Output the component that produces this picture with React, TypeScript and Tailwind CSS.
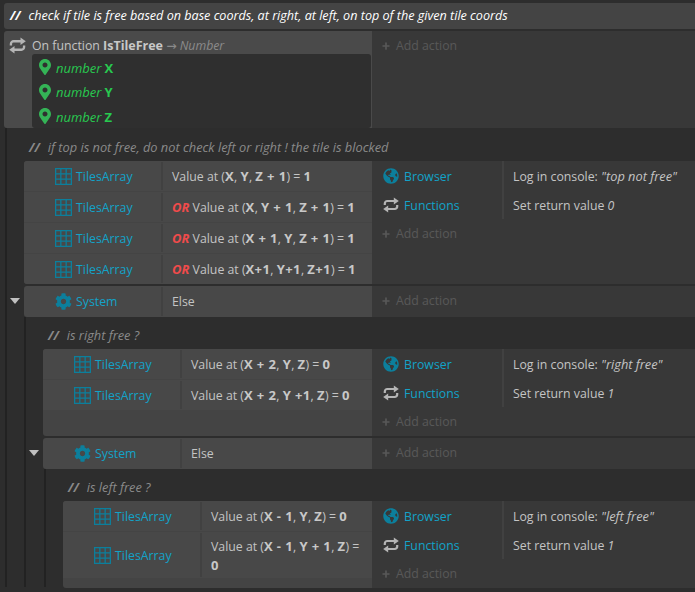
import * as React from "react";

import { FaCog, FaGlobeAmericas, FaMapMarkerAlt } from "react-icons/fa";
import { Plus } from "lucide-react";

const FONT = "font-['Open_Sans','Noto_Sans',sans-serif]";

function GridIcon() {
  return (
    <svg viewBox="0 0 16 16" className="size-[17px] flex-none" fill="none" stroke="#0c7f9c" strokeWidth="1.2">
      <rect x="0.6" y="0.6" width="14.8" height="14.8" />
      <path d="M5.5 0.6V15.4M10.5 0.6V15.4M0.6 5.5H15.4M0.6 10.5H15.4" />
    </svg>
  );
}

function SwapIcon({ className }: { className: string }) {
  return (
    <svg viewBox="0 0 16 16" className={className} fill="none">
      <path d="M1.8 8V6.5A2.5 2.5 0 0 1 4.3 4H12" stroke="currentColor" strokeWidth="2.2" />
      <path d="M10.8 0.4L15.8 4L10.8 7.6Z" fill="currentColor" />
      <path d="M14.2 8V9.5A2.5 2.5 0 0 1 11.7 12H4" stroke="currentColor" strokeWidth="2.2" />
      <path d="M5.2 8.4L0.2 12L5.2 15.6Z" fill="currentColor" />
    </svg>
  );
}

function ObjectCell({ icon, name }: { icon: React.ReactNode; name: string }) {
  return (
    <div className="flex w-[137px] flex-none items-center gap-[4px] pl-[31px] text-[#12a3c8]">
      {icon}
      <span className="pt-[1px]">{name}</span>
    </div>
  );
}

function B({ children }: { children: React.ReactNode }) {
  return <b className="text-[13px] font-bold tracking-[0.4px] text-[#c8c8c8]">{children}</b>;
}

function Or() {
  return <b className="text-[13px] font-bold text-[#f04b4b] italic">OR</b>;
}

function Condition({
  icon = <GridIcon />,
  name = "TilesArray",
  height = "h-[30px]",
  children,
}: {
  icon?: React.ReactNode;
  name?: string;
  height?: string;
  children: React.ReactNode;
}) {
  return (
    <div className={`flex ${height} bg-[#484848]`}>
      <ObjectCell icon={icon} name={name} />
      <div className="my-[1px] w-[2px] flex-none bg-[#414141]" />
      <div className="flex flex-1 items-center pt-[1px] pr-[10px] pl-[9px] leading-[18px] text-[#c4c4c4]">
        <div>{children}</div>
      </div>
    </div>
  );
}

function Action({
  icon,
  name,
  children,
}: {
  icon: React.ReactNode;
  name: string;
  children: React.ReactNode;
}) {
  return (
    <div className="flex h-[29px] items-center">
      <div className="flex w-[130px] flex-none items-center gap-[5px] pl-[11px] text-[#12a3c8]">
        {icon}
        <span className="pt-[2px]">{name}</span>
      </div>
      <div className="h-full w-[2px] flex-none bg-[#414141]" />
      <div className="pt-[2px] pl-[9px] whitespace-nowrap text-[#c4c4c4]">{children}</div>
    </div>
  );
}

function AddAction() {
  return (
    <div className="flex h-[29px] items-center gap-[5px] pt-[1px] pl-[9px] text-[#585858]">
      <Plus className="size-[10px]" strokeWidth={4} />
      <span>Add action</span>
    </div>
  );
}

const browserIcon = <FaGlobeAmericas className="size-[16px] flex-none text-[#0c7f9c]" />;
const functionsIcon = <SwapIcon className="size-[16px] flex-none text-[#b5b5b5]" />;
const systemIcon = <FaCog className="size-[17px] flex-none text-[#0c7f9c]" />;

function Event({
  width,
  conditions,
  actions,
  arrow = false,
}: {
  width: string;
  conditions: React.ReactNode;
  actions: React.ReactNode;
  arrow?: boolean;
}) {
  return (
    <div className="relative flex">
      {arrow && (
        <div className="absolute top-[12px] -left-[14px] size-0 border-x-[5px] border-t-[6px] border-x-transparent border-t-[#c0c0c0]" />
      )}
      <div className={`${width} flex-none overflow-hidden rounded-l-[3px] bg-[#444444]`}>{conditions}</div>
      <div className="min-w-0 flex-1 bg-[#383838]">{actions}</div>
    </div>
  );
}

function Comment({ text, box = "h-[32px] pt-[4px]" }: { text: string; box?: string }) {
  return (
    <div className={`flex ${box} items-center pl-[5px] text-[12.8px] text-[#8a8a8a] italic`}>
      <span className="mr-[8px] font-bold">//</span>
      <span>{text}</span>
    </div>
  );
}

function Param({ name, height = "h-[24.5px]" }: { name: string; height?: string }) {
  return (
    <div className={`flex ${height} items-center pl-[7px] text-[#28c94f]`}>
      <FaMapMarkerAlt className="h-[16px] w-[12px] flex-none text-[#34b356]" />
      <span className="ml-[5px] pt-[1px] text-[13px] italic">number</span>
      <b className="ml-[3px] pt-[1px] text-[13px] font-bold">{name}</b>
    </div>
  );
}

export default function App() {
  return (
    <div className={`${FONT} h-[592px] w-[695px] overflow-hidden bg-[#2d2d2d] text-[12.3px] leading-[16px]`}>
      <div className="pt-[3px] pl-[4px]">
        <div className="flex h-[26px] items-center rounded-l-[3px] bg-[#444444] pl-[6px] text-[12.6px] whitespace-nowrap text-white italic">
          <span className="mr-[8px] font-bold">//</span>
          <span>check if tile is free based on base coords, at right, at left, on top of the given tile coords</span>
        </div>

        <div className="mt-[2px] flex">
          <div className="flex w-[368px] flex-none flex-col rounded-l-[3px] bg-[#4a4a4a]">
            <div className="flex h-[23px] items-center pt-[6px]">
              <SwapIcon className="ml-[5px] size-[17px] flex-none text-[#b5b5b5]" />
              <span className="ml-[6px] text-[#c4c4c4]">
                On function <b className="text-[12.5px] font-bold text-[#c8c8c8]">IsTileFree</b>{" "}
                <span className="font-['DejaVu_Sans'] text-[#8a8a8a]">→</span>{" "}
                <i className="text-[#8a8a8a]">Number</i>
              </span>
            </div>
            <div className="mr-[1px] ml-[28px] rounded-[3px] bg-[#2f2f2f] pt-[1px]">
              <Param name="X" />
              <Param name="Y" />
              <Param name="Z" height="h-[24px]" />
            </div>
          </div>
          <div className="flex-1 bg-[#383838]">
            <AddAction />
          </div>
        </div>

        <div className="ml-[1px] border-l-[2px] border-[#222222] pl-[17px]">
          <Comment text="if top is not free, do not check left or right ! the tile is blocked" box="h-[33px] pt-[5px]" />
          <Event
            width="w-[348px]"
            conditions={
              <div className="flex flex-col gap-[1px]">
                <Condition>
                  Value at (<B>X</B>, <B>Y</B>, <B>Z + 1</B>) = <B>1</B>
                </Condition>
                <Condition>
                  <Or /> Value at (<B>X</B>, <B>Y + 1</B>, <B>Z + 1</B>) = <B>1</B>
                </Condition>
                <Condition>
                  <Or /> Value at (<B>X + 1</B>, <B>Y</B>, <B>Z + 1</B>) = <B>1</B>
                </Condition>
                <Condition>
                  <Or /> Value at (<B>X+1</B>, <B>Y+1</B>, <B>Z+1</B>) = <B>1</B>
                </Condition>
              </div>
            }
            actions={
              <div className="h-[123px]">
                <Action icon={browserIcon} name="Browser">
                  Log in console: <span className="text-[12.8px] italic">"top not free"</span>
                </Action>
                <Action icon={functionsIcon} name="Functions">
                  Set return value <i>0</i>
                </Action>
                <AddAction />
              </div>
            }
          />
          <div className="mt-[2px]">
            <Event
              arrow
              width="w-[348px]"
              conditions={
                <Condition icon={systemIcon} name="System" height="h-[31px]">
                  Else
                </Condition>
              }
              actions={<AddAction />}
            />
          </div>

          <div className="border-l-[2px] border-[#222222] pl-[17px]">
            <Comment text="is right free ?" />
            <Event
              width="w-[329px]"
              conditions={
                <div className="flex h-[86px] flex-col gap-[1px]">
                  <Condition>
                    Value at (<B>X + 2</B>, <B>Y</B>, <B>Z</B>) = <B>0</B>
                  </Condition>
                  <Condition>
                    Value at (<B>X + 2</B>, <B>Y +1</B>, <B>Z</B>) = <B>0</B>
                  </Condition>
                </div>
              }
              actions={
                <>
                  <Action icon={browserIcon} name="Browser">
                    Log in console: <span className="text-[12.8px] italic">"right free"</span>
                  </Action>
                  <Action icon={functionsIcon} name="Functions">
                    Set return value <i>1</i>
                  </Action>
                  <AddAction />
                </>
              }
            />
            <div className="mt-[2px]">
              <Event
                arrow
                width="w-[329px]"
                conditions={
                  <Condition icon={systemIcon} name="System" height="h-[31px]">
                    Else
                  </Condition>
                }
                actions={<AddAction />}
              />
            </div>

            <div className="ml-[1px] h-[118px] border-l-[2px] border-[#222222] pl-[17px]">
              <Comment text="is left free ?" />
              <Event
                width="w-[309px]"
                conditions={
                  <div className="flex h-[86px] flex-col gap-[1px]">
                    <Condition>
                      Value at (<B>X - 1</B>, <B>Y</B>, <B>Z</B>) = <B>0</B>
                    </Condition>
                    <Condition height="h-[46px]">
                      Value at (<B>X - 1</B>, <B>Y + 1</B>, <B>Z</B>) = <B>0</B>
                    </Condition>
                  </div>
                }
                actions={
                  <>
                    <Action icon={browserIcon} name="Browser">
                      Log in console: <span className="text-[12.8px] italic">"left free"</span>
                    </Action>
                    <Action icon={functionsIcon} name="Functions">
                      Set return value <i>1</i>
                    </Action>
                    <AddAction />
                  </>
                }
              />
            </div>
          </div>
        </div>
      </div>
    </div>
  );
}
